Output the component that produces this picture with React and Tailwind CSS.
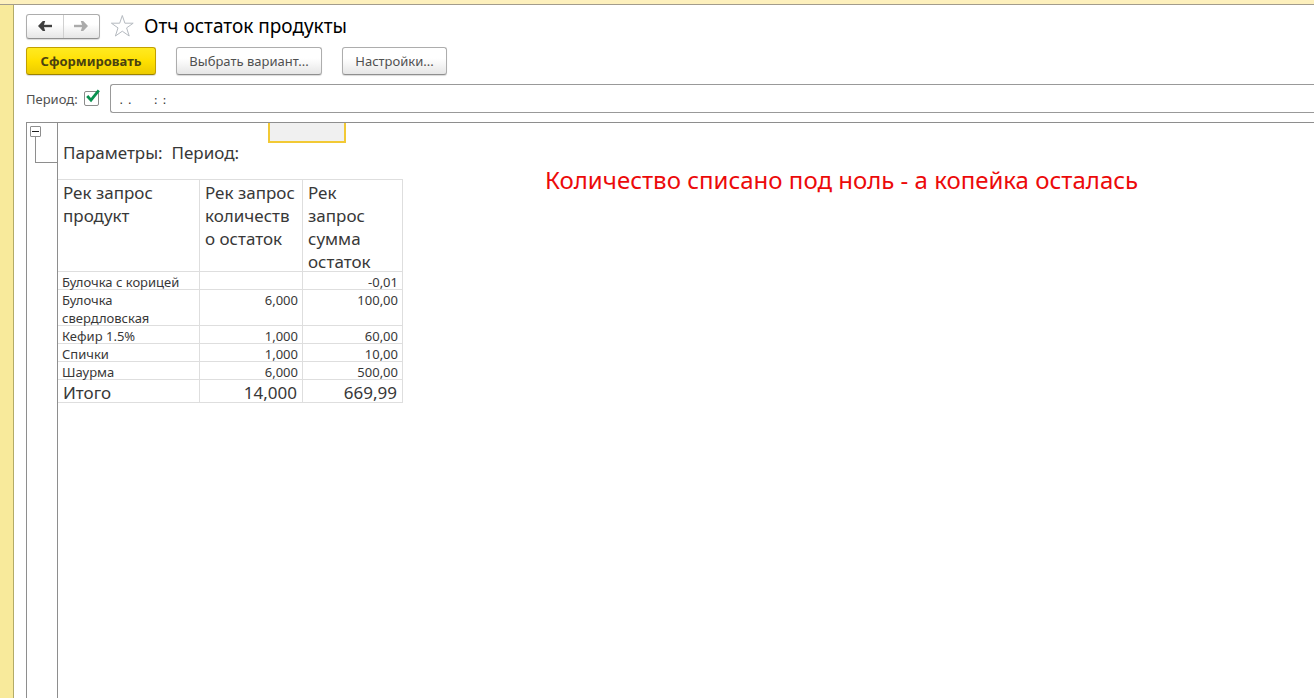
const HEADERS = ["Рек запрос продукт", "Рек запрос количеств о остаток", "Рек запрос сумма остаток"];

const ROWS = [
  { name: "Булочка с корицей", qty: "", sum: "-0,01" },
  { name: "Булочка свердловская", qty: "6,000", sum: "100,00", tall: true },
  { name: "Кефир 1.5%", qty: "1,000", sum: "60,00" },
  { name: "Спички", qty: "1,000", sum: "10,00" },
  { name: "Шаурма", qty: "6,000", sum: "500,00" },
];

const LIGHT_BUTTON =
  "h-7 rounded-[3px] border border-[#adadad] border-b-[#8f8f8f] bg-linear-to-b from-white from-40% to-[#e6e6e6] pt-px text-[13px] text-[#505050] shadow-[0_1px_1px_rgba(0,0,0,0.15)]";

function ArrowIcon({ className }) {
  return (
    <svg viewBox="0 0 14 10" className={className} fill="none" stroke="currentColor" aria-hidden="true">
      <path d="M3 5H14" strokeWidth="2.4" />
      <path d="M4.8 0H7.2L5.6 5L7.2 10H4.8L0 5Z" fill="currentColor" stroke="none" />
    </svg>
  );
}

function Toolbar() {
  return (
    <>
      <header className="flex h-[26px] items-center">
        <div className="flex h-[25px] w-[74px] rounded-[3px] border border-[#adadad] border-b-[#8f8f8f] bg-linear-to-b from-white from-40% to-[#e6e6e6] shadow-[0_1px_1px_rgba(0,0,0,0.15)]">
          <button type="button" aria-label="Назад" className="flex flex-1 items-center justify-center border-r border-[#d0d0d0] text-[#404040]">
            <ArrowIcon className="h-[10px] w-[14px]" />
          </button>
          <button type="button" aria-label="Вперед" className="flex flex-1 items-center justify-center text-[#ababab]">
            <ArrowIcon className="h-[10px] w-[14px] rotate-180" />
          </button>
        </div>
        <button type="button" aria-label="В избранное" className="ml-[10px] text-[#b5bac0]">
          <svg viewBox="0 0 24 24" className="h-6 w-6" fill="none" stroke="currentColor" aria-hidden="true">
            <path d="M12.3 1.5L14.9 9.2H23.2L16.6 13.9L19.2 22L12.3 17.2L5.4 22L8 13.9L1.4 9.2H9.7Z" />
          </svg>
        </button>
        <h1 className="ml-[10px] text-[19px] leading-[26px] text-black">Отч остаток продукты</h1>
      </header>
      <div className="mt-2 flex gap-5">
        <button
          type="button"
          className="h-7 w-[130px] rounded-[3px] border border-[#c2a000] border-b-[#9c8200] bg-linear-to-b from-[#ffea1f] via-[#ffe000] to-[#eccb00] pt-px text-[13px] font-bold text-[#4a4210] shadow-[0_1px_1px_rgba(0,0,0,0.15)]"
        >
          Сформировать
        </button>
        <button type="button" className={`${LIGHT_BUTTON} w-[146px]`}>Выбрать вариант...</button>
        <button type="button" className={`${LIGHT_BUTTON} w-[105px]`}>Настройки...</button>
      </div>
      <div className="mt-[9px] flex items-center text-[13px] text-[#505050]">
        <label htmlFor="use-period" className="pt-[2px]">Период:</label>
        <span className="relative ml-[6px] flex">
          <input
            id="use-period"
            type="checkbox"
            defaultChecked
            className="peer h-[15px] w-[15px] appearance-none rounded-[2px] border border-[#8c8c8c] bg-white"
          />
          <svg
            viewBox="0 0 16 16"
            className="pointer-events-none absolute -top-[2px] left-px hidden h-4 w-4 peer-checked:block"
            fill="none"
            stroke="#0a9150"
            aria-hidden="true"
          >
            <path d="M2.2 7L6 11.2L13.8 1.4" strokeWidth="2.8" />
          </svg>
        </span>
        <input
          type="text"
          aria-label="Значение периода"
          defaultValue=".  .        :  :"
          className="ml-[11px] h-[29px] min-w-0 flex-1 rounded-l-[3px] border border-r-0 border-[#999] bg-white pt-px pl-[9px] text-[11px] font-medium text-[#303030] outline-none"
        />
      </div>
    </>
  );
}

function ReportTable() {
  const cell = "border-r border-b border-[#dedede] p-0";
  return (
    <table className="w-[345px] table-fixed border-separate border-spacing-0">
      <colgroup>
        <col className="w-[142px]" />
        <col className="w-[103px]" />
        <col className="w-[100px]" />
      </colgroup>
      <thead>
        <tr>
          {HEADERS.map((h) => (
            <th key={h} scope="col" className={`${cell} border-t text-left align-top text-[17px] leading-[23px] font-normal last:pr-1`}>
              <div className="h-[91px] pt-px pr-[2px] pl-[5px]">{h}</div>
            </th>
          ))}
        </tr>
      </thead>
      <tbody className="text-[13px] leading-[18px]">
        {ROWS.map((r) => (
          <tr key={r.name}>
            <td className={`${cell} align-top`}>
              <div className={`px-1 pt-px ${r.tall ? "h-[35px]" : "h-[17px]"}`}>{r.name}</div>
            </td>
            <td className={`${cell} text-right align-top`}>
              <div className="h-[17px] pt-px pr-1">{r.qty}</div>
            </td>
            <td className={`${cell} text-right align-top`}>
              <div className="h-[17px] pt-px pr-1">{r.sum}</div>
            </td>
          </tr>
        ))}
      </tbody>
      <tfoot className="text-[17px] leading-[19px]">
        <tr>
          <td className={`${cell} pt-[3px] pl-[5px]`}>Итого</td>
          <td className={`${cell} pt-[3px] pr-[5px] text-right`}>14,000</td>
          <td className={`${cell} pt-[3px] pr-[5px] text-right`}>669,99</td>
        </tr>
      </tfoot>
    </table>
  );
}

function Report() {
  return (
    <section className="mt-[9px] flex flex-1 border-t border-l border-[#8e8e8e]">
      <div className="w-[31px] shrink-0 border-r border-[#8e8e8e] pt-[3px] pl-[3px]">
        <button
          type="button"
          aria-label="Свернуть группу"
          className="flex h-[11px] w-[11px] items-center justify-center rounded-[1px] border border-[#8e8e8e]"
        >
          <span className="h-px w-[7px] bg-[#202020]" />
        </button>
        <div className="ml-[5px] h-[26px] border-b border-l border-[#8e8e8e]" />
      </div>
      <div className="relative flex min-w-0 flex-1 items-start text-[#383838]">
        <div className="absolute top-0 left-[210px] h-5 w-[78px] border-2 border-t-0 border-[#f2c935] bg-[#f0f0f0]" />
        <div className="shrink-0">
          <p className="h-14 pt-[18px] pl-[5px] text-[17px] leading-[23px] whitespace-pre">Параметры:  Период:</p>
          <ReportTable />
        </div>
        <p className="mt-[39px] ml-[142px] text-[24px] leading-9 text-[#ec0a0a]">
          Количество списано под ноль - а копейка осталась
        </p>
      </div>
    </section>
  );
}

export default function App() {
  return (
    <div className="flex min-h-screen flex-col bg-white font-['Noto_Sans',sans-serif]">
      <div className="h-[5px] border-b border-[#a39c8c] bg-[#fdf0bd]" />
      <div className="flex flex-1">
        <div className="w-[14px] shrink-0 border-r border-[#b3ab68] bg-[#f8ea9b]" />
        <main className="flex min-w-0 flex-1 flex-col pt-2 pl-3">
          <Toolbar />
          <Report />
        </main>
      </div>
    </div>
  );
}
